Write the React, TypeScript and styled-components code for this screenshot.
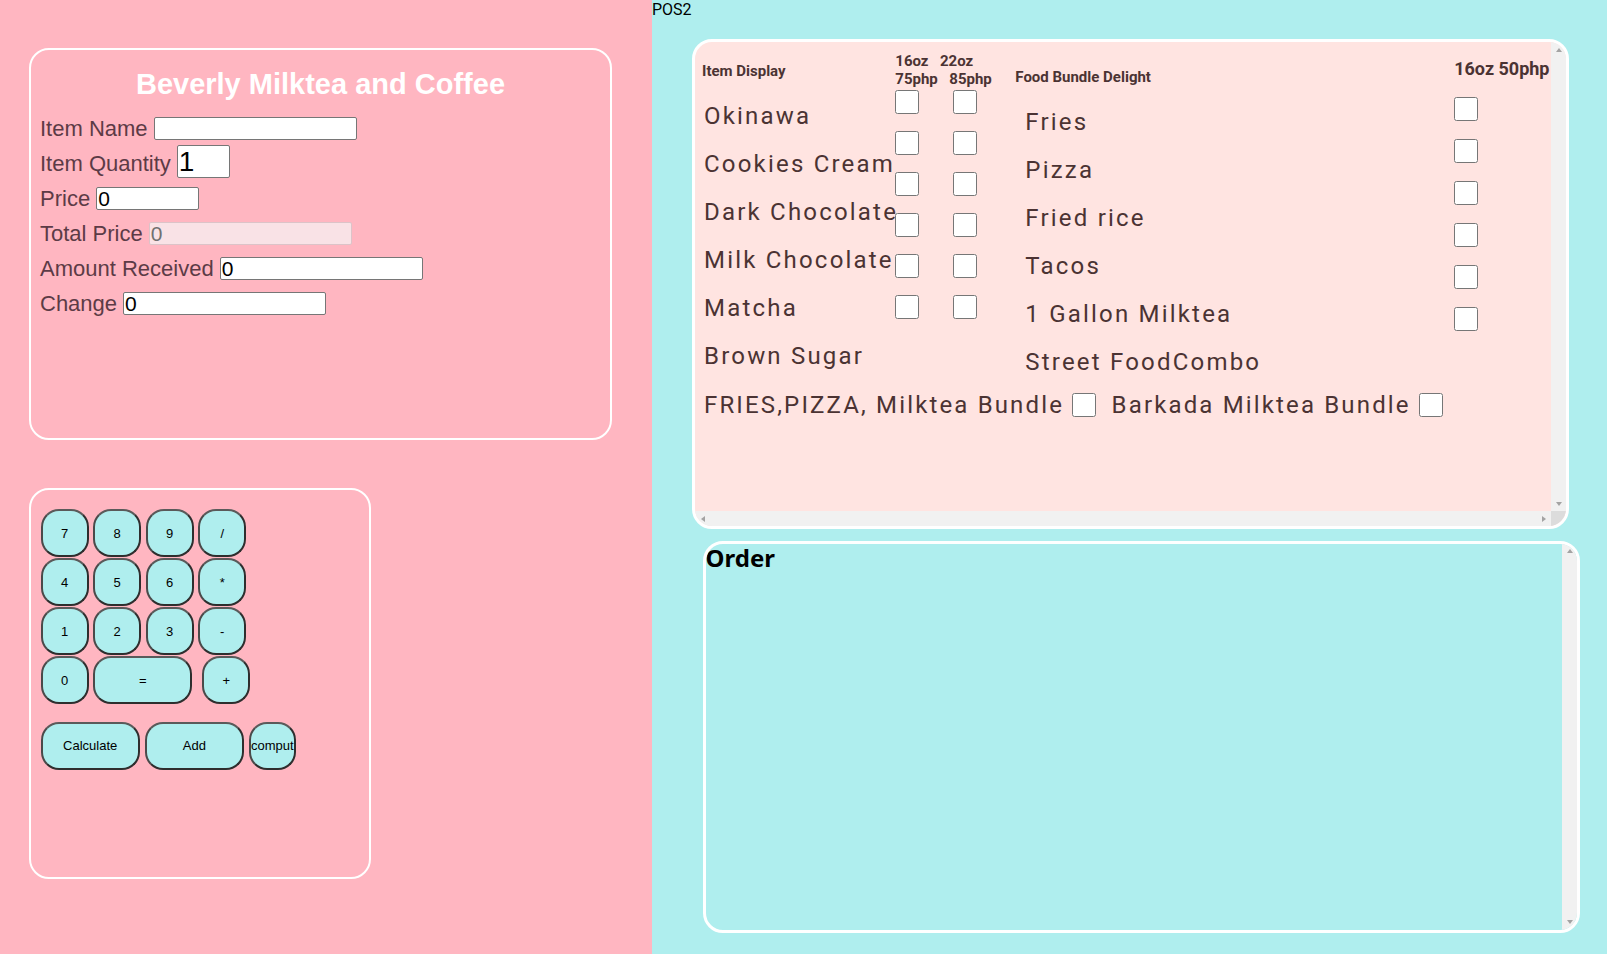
import React from 'react'
import styled, { createGlobalStyle } from 'styled-components'

const drinks = ['Okinawa', 'Cookies Cream', 'Dark Chocolate', 'Milk Chocolate', 'Matcha', 'Brown Sugar']
const foods = ['Fries', 'Pizza', 'Fried rice', 'Tacos', '1 Gallon Milktea', 'Street FoodCombo']
const keyRows = [
  ['7', '8', '9', '/'],
  ['4', '5', '6', '*'],
  ['1', '2', '3', '-'],
]

type Dir = 'up' | 'down' | 'left' | 'right'

const VBar: React.FC = () => (
  <VScroll>
    <ArrowButton><Arrow $dir="up" /></ArrowButton>
    <ArrowButton><Arrow $dir="down" /></ArrowButton>
  </VScroll>
)

const HBar: React.FC = () => (
  <HScroll>
    <ArrowButton><Arrow $dir="left" /></ArrowButton>
    <ArrowButton><Arrow $dir="right" /></ArrowButton>
  </HScroll>
)

const App: React.FC = () => {
  return (
    <Page>
      <GlobalStyle />
      <LeftPanel>
        <FormCard>
          <Title>Beverly Milktea and Coffee</Title>
          <Row>
            <Label>Item Name</Label>
            <Field $w={203} defaultValue="" />
          </Row>
          <Row>
            <Label>Item Quantity</Label>
            <QtyField $w={53} defaultValue="1" />
          </Row>
          <Row>
            <Label>Price</Label>
            <Field $w={103} defaultValue="0" />
          </Row>
          <Row>
            <Label>Total Price</Label>
            <TotalField $w={203} defaultValue="0" disabled />
          </Row>
          <Row>
            <Label>Amount Received</Label>
            <Field $w={203} defaultValue="0" />
          </Row>
          <Row>
            <Label>Change</Label>
            <Field $w={203} defaultValue="0" />
          </Row>
        </FormCard>

        <CalcCard>
          {keyRows.map((row) => (
            <KeyRow key={row.join('')}>
              {row.map((k) => (
                <Key key={k}>{k}</Key>
              ))}
            </KeyRow>
          ))}
          <KeyRow>
            <Key>0</Key>
            <Key $wide>=</Key>
            <Key $push>+</Key>
          </KeyRow>
          <ActionRow>
            <Key $wide>Calculate</Key>
            <Key $wide>Add</Key>
            <Key $tight>comput</Key>
          </ActionRow>
        </CalcCard>
      </LeftPanel>

      <RightPanel>
        <PosLabel>POS2</PosLabel>
        <MenuCard>
          <MenuBody>
            <MenuGrid>
              <DrinkCol>
                <ColHeader $h={49.8} $pt={19.4} $size={15}>Item Display</ColHeader>
                {drinks.map((d) => (
                  <ItemText key={d} $indent={2}>{d}</ItemText>
                ))}
              </DrinkCol>

              <SizeCol>
                <SizeHeader>
                  <HeaderLine>
                    <span>16oz</span>
                    <span>22oz</span>
                  </HeaderLine>
                  <HeaderLine>
                    <span>75php</span>
                    <span>85php</span>
                  </HeaderLine>
                </SizeHeader>
                <BoxGrid>
                  {drinks.map((d) => (
                    <React.Fragment key={d}>
                      <Check />
                      <Check />
                    </React.Fragment>
                  ))}
                </BoxGrid>
              </SizeCol>

              <FoodCol>
                <ColHeader $h={55.8} $pt={25.4} $size={15}>Food Bundle Delight</ColHeader>
                {foods.map((f) => (
                  <ItemText key={f} $indent={10}>{f}</ItemText>
                ))}
              </FoodCol>

              <PriceCol>
                <ColHeader $h={54.7} $pt={15.3} $size={18}>16oz 50php</ColHeader>
                <BoxStack>
                  {foods.map((f) => (
                    <Check key={f} />
                  ))}
                </BoxStack>
              </PriceCol>
            </MenuGrid>

            <BundleRow>
              <BundleText>FRIES,PIZZA, Milktea Bundle</BundleText>
              <Check />
              <BundleText $lead>Barkada Milktea Bundle</BundleText>
              <Check />
            </BundleRow>
          </MenuBody>
          <VBar />
          <HBar />
          <ScrollCorner />
        </MenuCard>

        <OrderCard>
          <OrderBody>
            <OrderTitle>Order</OrderTitle>
          </OrderBody>
          <VBar />
        </OrderCard>
      </RightPanel>
    </Page>
  )
}

const GlobalStyle = createGlobalStyle`
  html, body {
    margin: 0;
    padding: 0;
  }
  body {
    font-family: Roboto, 'Noto Sans', sans-serif;
  }
`

const Page = styled.div`
  display: grid;
  grid-template-columns: 652px 1fr;
  min-height: 100vh;
`

const LeftPanel = styled.div`
  background: #ffb6c1;
  padding: 48px 0 0 29px;
  display: flex;
  flex-direction: column;
  gap: 48px;
`

const FormCard = styled.div`
  box-sizing: border-box;
  width: 583px;
  height: 392px;
  border: 2px solid #fff;
  border-radius: 20px;
  padding: 18px 9px 0;
`

const Title = styled.h1`
  margin: 0 0 14.6px;
  text-align: center;
  font: 700 29px 'Liberation Sans', Arial, sans-serif;
  color: #fff;
`

const Row = styled.div`
  display: flex;
  align-items: baseline;
  height: 35px;
`

const Label = styled.span`
  font: 22px 'Liberation Sans', Arial, sans-serif;
  color: #5c3b46;
  white-space: nowrap;
`

const Field = styled.input<{ $w: number }>`
  box-sizing: border-box;
  width: ${(p) => p.$w}px;
  height: 23px;
  margin: 0 0 0 6px;
  padding: 0 1px;
  border: 1px solid #767676;
  border-radius: 2px;
  background: #fff;
  color: #000;
  font: 21px 'Liberation Sans', Arial, sans-serif;
  outline: none;
`

const QtyField = styled(Field)`
  height: 33px;
  margin-top: -9.4px;
  font-size: 28px;
`

const TotalField = styled(Field)`
  background: #f9e2e6;
  border-color: #dcc3c8;
  color: #707070;
`

const CalcCard = styled.div`
  box-sizing: border-box;
  width: 342px;
  height: 391px;
  border: 2px solid #fff;
  border-radius: 20px;
  padding: 19.3px 0 0 9.7px;
`

const KeyRow = styled.div`
  display: flex;
  gap: 4.5px;
  margin-bottom: 1px;
`

const ActionRow = styled.div`
  display: flex;
  gap: 5.2px;
  margin-top: 17.5px;
`

const Key = styled.button<{ $wide?: boolean; $push?: boolean; $tight?: boolean }>`
  box-sizing: border-box;
  width: ${(p) => (p.$wide ? 99 : p.$tight ? 46.6 : 48)}px;
  height: 48px;
  margin-left: ${(p) => (p.$push ? 5.5 : 0)}px;
  padding: 0;
  border: 2px solid #2e2e2e;
  border-top-color: #5a5a5a;
  border-left-color: #4a4a4a;
  border-radius: 18px;
  background: #afeeee;
  color: #000;
  font: 13px 'Liberation Sans', Arial, sans-serif;
  white-space: nowrap;
  overflow: hidden;
`

const RightPanel = styled.div`
  background: #afeeee;
  display: flex;
  flex-direction: column;
`

const PosLabel = styled.div`
  font: 16px Roboto, sans-serif;
  color: #000;
`

/* scrollbar look-alikes */
const VScroll = styled.div`
  display: flex;
  flex-direction: column;
  justify-content: space-between;
  background: #f1f1f1;
`

const HScroll = styled.div`
  display: flex;
  justify-content: space-between;
  background: #f1f1f1;
`

const ScrollCorner = styled.div`
  background: #dcdcdc;
`

const ArrowButton = styled.div`
  flex: none;
  width: 15px;
  height: 15px;
  display: flex;
  align-items: center;
  justify-content: center;
`

const arrowBorders: Record<Dir, string> = {
  up: 'border-width: 0 3.5px 4px; border-color: transparent transparent #a3a3a3;',
  down: 'border-width: 4px 3.5px 0; border-color: #a3a3a3 transparent transparent;',
  left: 'border-width: 3.5px 4px 3.5px 0; border-color: transparent #a3a3a3 transparent transparent;',
  right: 'border-width: 3.5px 0 3.5px 4px; border-color: transparent transparent transparent #a3a3a3;',
}

const Arrow = styled.span<{ $dir: Dir }>`
  width: 0;
  height: 0;
  border-style: solid;
  ${(p) => arrowBorders[p.$dir]}
`

const MenuCard = styled.div`
  box-sizing: border-box;
  width: 877px;
  height: 490px;
  margin: 20.3px 0 0 40px;
  border: 3px solid #fff;
  border-radius: 20px;
  overflow: hidden;
  display: grid;
  grid-template-columns: 1fr 15px;
  grid-template-rows: 1fr 15px;
  background: #ffe4e1;
  color: #4b3333;
`

const MenuBody = styled.div`
  min-width: 0;
  padding-left: 7px;
  overflow: hidden;
`

const MenuGrid = styled.div`
  display: flex;
  align-items: flex-start;
`

const DrinkCol = styled.div`
  flex: none;
  width: 193.3px;
`

const ColHeader = styled.div<{ $h: number; $pt: number; $size: number }>`
  box-sizing: border-box;
  height: ${(p) => p.$h}px;
  padding-top: ${(p) => p.$pt}px;
  font: 700 ${(p) => p.$size}px Roboto, sans-serif;
  white-space: nowrap;
`

const ItemText = styled.div<{ $indent: number }>`
  padding-left: ${(p) => p.$indent}px;
  font: 400 24px Roboto, sans-serif;
  letter-spacing: 2.2px;
  line-height: 48px;
  height: 48px;
  white-space: nowrap;
`

const SizeCol = styled.div`
  flex: none;
  width: 120px;
`

const SizeHeader = styled.div`
  padding-top: 9.8px;
  font: 700 15px Roboto, sans-serif;
`

const HeaderLine = styled.div`
  display: flex;
  gap: 11.5px;
  white-space: nowrap;
`

const BoxGrid = styled.div`
  display: grid;
  grid-template-columns: 24px 24px;
  column-gap: 34px;
  row-gap: 17px;
  margin-top: 2.3px;
`

const FoodCol = styled.div`
  flex: 1;
  min-width: 0;
`

const PriceCol = styled.div`
  flex: none;
  padding-right: 1.5px;
`

const BoxStack = styled.div`
  display: flex;
  flex-direction: column;
  gap: 18px;
`

const Check = styled.input.attrs({ type: 'checkbox' })`
  display: block;
  flex: none;
  width: 24px;
  height: 24px;
  margin: 0;
`

const BundleRow = styled.div`
  display: flex;
  align-items: center;
  margin-top: 5.2px;
  padding-left: 2px;
`

const BundleText = styled.span<{ $lead?: boolean }>`
  margin: 0 8px 0 ${(p) => (p.$lead ? 15.5 : 0)}px;
  font: 400 24px Roboto, sans-serif;
  letter-spacing: 2.15px;
  white-space: nowrap;
`

const OrderCard = styled.div`
  box-sizing: border-box;
  width: 877.5px;
  height: 392px;
  margin: 11.4px 0 0 50.5px;
  border: 3px solid #fff;
  border-radius: 20px;
  overflow: hidden;
  display: grid;
  grid-template-columns: 1fr 15px;
`

const OrderBody = styled.div`
  min-width: 0;
`

const OrderTitle = styled.h2`
  margin: 0;
  font: 700 24px 'Noto Sans', 'Open Sans', sans-serif;
  line-height: 1.15;
  color: #000;
`

export default App
